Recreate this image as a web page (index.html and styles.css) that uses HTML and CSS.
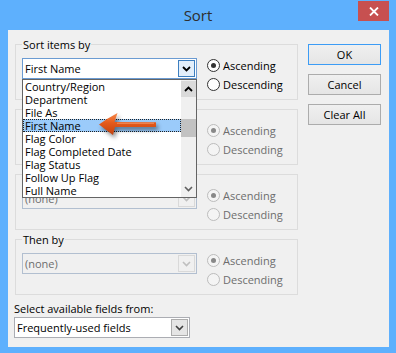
FILE: index.html
```html
<!DOCTYPE html>
<html>
<head>
<meta charset="utf-8">
<title>Sort</title>
<link rel="stylesheet" href="styles.css">
</head>
<body>
<div class="window">
  <div class="titlebar">
    <span></span>
    <span class="title">Sort</span>
    <span class="close">
      <svg width="10" height="9" viewBox="0 0 10 9"><path d="M1 0.5 L9 8.5 M9 0.5 L1 8.5" stroke="#fff" stroke-width="1.8" fill="none"/></svg>
    </span>
  </div>
  <div class="client">
    <div class="main">
      <div class="groups">
        <div class="group">
          <span class="legend">Sort items by</span>
          <div class="group-body">
            <div class="combo combo-open">
              <span class="combo-text">First Name</span>
              <span class="combo-btn"><svg width="9" height="6" viewBox="0 0 9 6"><path d="M1 1 L4.5 4.5 L8 1" stroke="#000" stroke-width="1.8" fill="none"/></svg></span>
              <div class="droplist">
                <div class="items">
                  <div class="item">Country/Region</div>
                  <div class="item">Department</div>
                  <div class="item">File As</div>
                  <div class="item selected">First Name</div>
                  <div class="item">Flag Color</div>
                  <div class="item">Flag Completed Date</div>
                  <div class="item">Flag Status</div>
                  <div class="item">Follow Up Flag</div>
                  <div class="item">Full Name</div>
                </div>
                <div class="scrollbar">
                  <div class="sb-up"><svg width="9" height="6" viewBox="0 0 9 6"><path d="M1 5 L4.5 1.5 L8 5" stroke="#000" stroke-width="1.8" fill="none"/></svg></div>
                  <div class="sb-track"><div class="sb-thumb"></div></div>
                  <div class="sb-down"><svg width="9" height="6" viewBox="0 0 9 6"><path d="M1 1 L4.5 4.5 L8 1" stroke="#606060" stroke-width="1.6" fill="none"/></svg></div>
                </div>
                <svg class="pointer" width="68" height="28" viewBox="94 111 68 28">
                  <defs>
                    <linearGradient id="og" x1="0" y1="0" x2="0" y2="1">
                      <stop offset="0" stop-color="#f7894a"/>
                      <stop offset="0.45" stop-color="#e45a1c"/>
                      <stop offset="1" stop-color="#c0420f"/>
                    </linearGradient>
                  </defs>
                  <path d="M100 124.5 Q108 118.5 118.5 113 L115.5 122 L157 122.3 L157 127 L116 127 L114 135 Q107 130 100 124.5 Z" fill="url(#og)"/>
                  <path d="M118 123.2 L155 123.2" stroke="#f9a275" stroke-width="0.8"/>
                </svg>
              </div>
            </div>
            <div class="radios">
              <label class="radio checked"><span class="circle"></span>Ascending</label>
              <label class="radio"><span class="circle"></span>Descending</label>
            </div>
          </div>
        </div>

        <div class="group">
          <span class="legend covered">Then by</span>
          <div class="group-body">
            <div class="combo combo-disabled">
              <span class="combo-text covered">(none)</span>
              <span class="combo-btn"><svg width="9" height="6" viewBox="0 0 9 6"><path d="M1 1 L4.5 4.5 L8 1" stroke="#bfbfbf" stroke-width="1.6" fill="none"/></svg></span>
            </div>
            <div class="radios disabled">
              <label class="radio checked"><span class="circle"></span>Ascending</label>
              <label class="radio"><span class="circle"></span>Descending</label>
            </div>
          </div>
        </div>

        <div class="group">
          <span class="legend covered">Then by</span>
          <div class="group-body">
            <div class="combo combo-disabled">
              <span class="combo-text">(none)</span>
              <span class="combo-btn"><svg width="9" height="6" viewBox="0 0 9 6"><path d="M1 1 L4.5 4.5 L8 1" stroke="#bfbfbf" stroke-width="1.6" fill="none"/></svg></span>
            </div>
            <div class="radios disabled">
              <label class="radio checked"><span class="circle"></span>Ascending</label>
              <label class="radio"><span class="circle"></span>Descending</label>
            </div>
          </div>
        </div>

        <div class="group">
          <span class="legend">Then by</span>
          <div class="group-body">
            <div class="combo combo-disabled">
              <span class="combo-text">(none)</span>
              <span class="combo-btn"><svg width="9" height="6" viewBox="0 0 9 6"><path d="M1 1 L4.5 4.5 L8 1" stroke="#bfbfbf" stroke-width="1.6" fill="none"/></svg></span>
            </div>
            <div class="radios disabled">
              <label class="radio checked"><span class="circle"></span>Ascending</label>
              <label class="radio"><span class="circle"></span>Descending</label>
            </div>
          </div>
        </div>
      </div>

      <div class="buttons">
        <span class="btn default">OK</span>
        <span class="btn">Cancel</span>
        <span class="btn">Clear All</span>
      </div>
    </div>

    <div class="fields">
      <div class="fields-label">Select available fields from:</div>
      <div class="combo combo-white">
        <span class="combo-text">Frequently-used fields</span>
        <span class="combo-btn"><svg width="9" height="6" viewBox="0 0 9 6"><path d="M1 1 L4.5 4.5 L8 1" stroke="#404040" stroke-width="1.6" fill="none"/></svg></span>
      </div>
    </div>
  </div>
</div>
</body>
</html>
```
FILE: styles.css
```css
* { box-sizing: border-box; }

html, body {
  margin: 0;
  padding: 0;
}

body {
  width: 396px;
  height: 353px;
  overflow: hidden;
  font-family: "Open Sans", "Noto Sans", sans-serif;
  font-size: 11px;
  color: #000;
}

.window {
  width: 396px;
  height: 353px;
  background: #5eb0fd;
  padding: 0 7px 6px 8px;
  display: flex;
  flex-direction: column;
}

.titlebar {
  height: 30px;
  display: grid;
  grid-template-columns: 1fr auto 1fr;
  margin: 0 -7px 0 -8px;
}

.title {
  font-size: 15px;
  line-height: 30px;
  color: #2e2e2e;
}

.close {
  justify-self: end;
  align-self: start;
  margin: 1px 7px 0 0;
  width: 31px;
  height: 20px;
  background: #c75050;
  display: flex;
  align-items: center;
  justify-content: center;
}

.client {
  flex: 1;
  background: #f0f0f0;
  padding: 14px 0 0 7px;
}

.main {
  display: flex;
  gap: 10px;
}

.groups {
  width: 283px;
  display: flex;
  flex-direction: column;
  gap: 9px;
}

.group {
  height: 56px;
  border: 1px solid #dcdcdc;
}

.legend {
  display: block;
  width: fit-content;
  margin: -8px 0 0 6px;
  padding: 0 1px;
  height: 15px;
  line-height: 15px;
  background: #f0f0f0;
}

.covered {
  visibility: hidden;
}

.group-body {
  display: flex;
  align-items: flex-start;
  padding-left: 6px;
}

.combo {
  position: relative;
  width: 175px;
  height: 21px;
  margin-top: 6px;
  border: 1px solid #abadb3;
  display: flex;
  align-items: center;
  padding: 1px;
}

.combo-text {
  flex: 1;
  padding-left: 1px;
  line-height: 17px;
}

.combo-btn {
  width: 17px;
  height: 17px;
  display: flex;
  align-items: center;
  justify-content: center;
  border: 1px solid transparent;
}

.combo-open {
  background: #fff;
  border-color: #6b9bd2;
}

.combo-open .combo-btn {
  background: #e3effb;
  border-color: #3d7fc0;
}

.combo-disabled {
  background: #f0f0f0;
  border-color: #b2bfd0;
  color: #6d6d6d;
}

.combo-disabled .combo-btn {
  border-color: #d9d9d9;
  background: #f0f0f0;
}

.combo-white {
  background: #fff;
  width: 176px;
  margin: 1px 0 0 -1px;
}

.combo-white .combo-btn {
  background: #e5e5e5;
  border-color: #acacac;
}

.droplist {
  position: absolute;
  left: -1px;
  top: calc(100% + 1px);
  width: 175px;
  height: 119px;
  border: 1px solid #646464;
  background: #fff;
  display: flex;
  z-index: 5;
}

.items {
  width: 158px;
}

.item {
  height: 13px;
  line-height: 13px;
  padding-left: 2px;
  white-space: nowrap;
}

.item.selected {
  background: #9bcbfa;
  outline: 1px dotted #222;
  outline-offset: -1px;
}

.scrollbar {
  width: 15px;
  background: #f0f0f0;
  display: flex;
  flex-direction: column;
  padding-top: 1px;
}

.sb-up {
  height: 16px;
  background: #dadada;
  display: flex;
  align-items: center;
  justify-content: center;
}

.sb-track {
  flex: 1;
  padding-top: 22px;
}

.sb-thumb {
  height: 18px;
  background: #c2c2c2;
}

.sb-down {
  height: 16px;
  display: flex;
  align-items: center;
  justify-content: center;
}

.pointer {
  position: absolute;
  left: 70px;
  top: 31px;
  overflow: visible;
  filter: drop-shadow(2px 3px 2px rgba(0, 0, 0, 0.45));
}

.radios {
  margin: 4px 0 0 10px;
  display: flex;
  flex-direction: column;
}

.radio {
  height: 19px;
  display: flex;
  align-items: center;
  gap: 3px;
}

.circle {
  width: 13px;
  height: 13px;
  border-radius: 50%;
  border: 1px solid #333;
  background: #fff;
  display: flex;
  align-items: center;
  justify-content: center;
}

.radio.checked .circle::after {
  content: "";
  width: 5px;
  height: 5px;
  border-radius: 50%;
  background: #333;
}

.radios.disabled .radio {
  color: #6d6d6d;
}

.radios.disabled .circle {
  border-color: #bcbcbc;
  background: #f4f4f4;
}

.radios.disabled .radio.checked .circle::after {
  background: #888;
}

.buttons {
  width: 73px;
  display: flex;
  flex-direction: column;
  gap: 9px;
}

.btn {
  height: 21px;
  border: 1px solid #acacac;
  background: linear-gradient(#f0f0f0, #e5e5e5);
  display: flex;
  align-items: center;
  justify-content: center;
}

.btn.default {
  border-color: #3c9cf5;
}

.fields {
  margin-top: 6px;
}

.fields-label {
  margin-left: -1px;
  line-height: 15px;
}
```
